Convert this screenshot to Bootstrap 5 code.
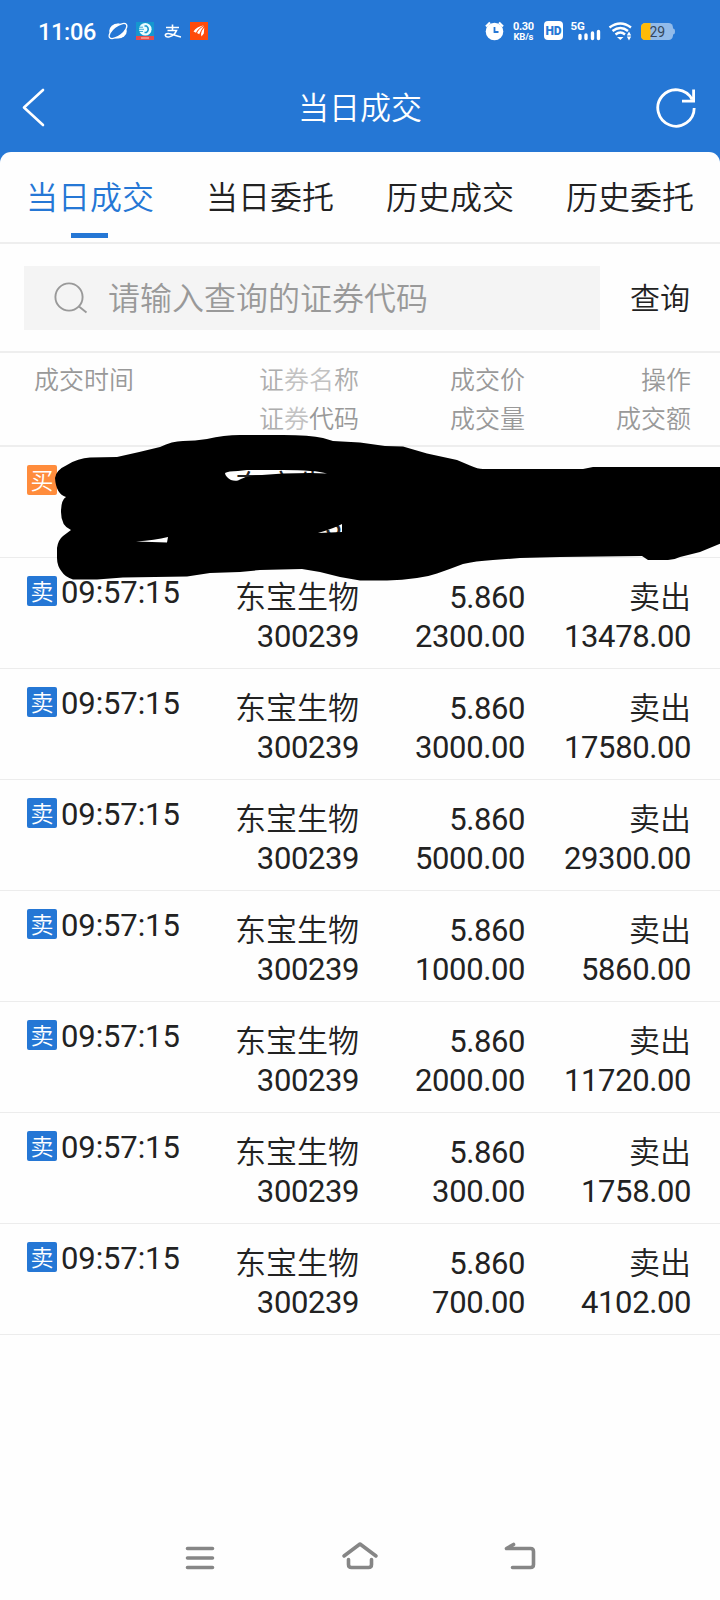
<!DOCTYPE html>
<html lang="zh-CN">
<head>
<meta charset="utf-8">
<meta name="viewport" content="width=device-width, initial-scale=1">
<title>当日成交</title>
<link href="https://cdn.jsdelivr.net/npm/bootstrap@5.3.0/dist/css/bootstrap.min.css" rel="stylesheet">
<style>
:root{--brand:#2577d5}
body{background:#fefefe;color:#222;font-family:Roboto,"Noto Sans CJK SC",sans-serif;font-weight:400;min-height:1600px;overflow-x:hidden}
.cjk{font-family:"Noto Sans CJK SC DemiLight","Noto Sans CJK SC",sans-serif;font-weight:350}
.top-area{background:var(--brand);height:174px}
.status{height:62px;padding:0 44px 0 38px}
.clock{font-size:23.5px;font-weight:500;line-height:24px;width:58px;letter-spacing:-.3px;padding-top:1px}
.title-bar{height:90px;padding:0 22px 0 20px}
.page-title{font-size:31px;line-height:40px;padding:0 0 2px 4px}
.sheet{background:#fefefe;border-radius:11px 11px 0 0;margin-top:-22px}
.tabs-row{height:92px;border-bottom:2px solid #eee}
.tab-item{font-size:32px;line-height:48px;padding-top:19px;color:#222;border:0}
.tab-item.active{color:var(--brand)}
.tab-item.active::after{content:"";display:block;width:37px;height:5px;background:var(--brand);margin:14px 0 0 71px}
.search-row{height:109px;padding:0 30px 0 24px;border-bottom:2px solid #eee}
.search-box{width:576px;height:64px;background:#f4f4f4;padding-left:30px;color:#999;font-size:32px}
.search-box span,.query{padding-bottom:3px}
.query{font-size:30px}
.grid{display:grid;grid-template-columns:170px 162px 166px 166px}
.head-row{height:94px;padding:6px 0 0 27px;color:#999;font-size:25px;line-height:39px;border-bottom:2px solid #eee}
.head-row .first{padding-left:7px}
.trade{height:111px;padding:20px 0 0 27px;border-bottom:1px solid #ececec;font-size:31px;line-height:39px;letter-spacing:-.4px}
.trade b{display:block;height:39px;line-height:33px;letter-spacing:0}
.side{width:30px;height:30px;border-radius:2px;background:var(--brand);color:#fff;font-size:23px;line-height:28px;margin-top:-2px;letter-spacing:0}
.side.buy{background:#ff8c3c}
.time{line-height:30px;margin-left:4px;letter-spacing:-.1px}
.f1{color:#adadad}.f2{color:#c2c2c2}
.scribble{left:0;top:-17px;z-index:2}
.sysnav{height:90px;margin-top:175px}
</style>
</head>
<body>
<header class="top-area text-white">
  <div class="status d-flex align-items-center justify-content-between">
    <div class="d-flex align-items-center">
      <span class="clock">11:06</span>
      <svg width="114" height="24" viewBox="96 19 114 24">
        <ellipse cx="118" cy="31" rx="8.800" ry="7.600" fill="#fff"/>
        <ellipse cx="118" cy="31" rx="10.600" ry="4.700" fill="#2577d5" stroke="#fff" stroke-width="1.300" transform="rotate(-38 118 31)"/>
        <path d="M115 38.500q9 0 11.500-10-4 7-11.500 10zM111 31q3-5.500 9-7.500-8 0-9 7.500z" fill="#fff"/>
        <rect x="136" y="22" width="18" height="18" fill="#1597cf"/>
        <circle cx="145.300" cy="29.300" r="6.300" fill="#e9fbff"/>
        <path d="M144.500 26h2q3.500 3.200 0 6.500h-2" stroke="#1597cf" stroke-width="1.600" fill="none"/>
        <path d="M139 27.200h4M139 29.300h5M139 31.500h4" stroke="#1597cf" stroke-width=".8"/>
        <rect x="136" y="36" width="18" height="4" fill="#e84b4b"/>
        <path d="M141 38h8" stroke="#ffb9a8" stroke-width="1.200"/>
        <path d="M166 27.500h13M172.500 24.500v5.500M167.500 30.500h9q-2 5-7 6.300c-5 1-5.500-3.300-1.500-3.300 4 0 8 3 13 3.500" stroke="#fff" stroke-width="1.600" fill="none"/>
        <rect x="190" y="22" width="18" height="18" fill="#ff4b0a"/>
        <path d="M193.500 31.500q3-5 10.500-6.300-6 3-8 7.500zM197 33q2-4.500 7-7-3 4-4.800 8.300zM201 34q.5-3.500 3.300-6.500l-.5 6-2.300 3z" fill="#fff"/>
      </svg>
    </div>
    <svg width="192" height="26" viewBox="484 18 192 26" font-family="Roboto,sans-serif">
      <circle cx="494.500" cy="31.500" r="8.800" fill="#fff"/>
      <path d="M486 26.500l4-4M503 26.500l-4-4" stroke="#fff" stroke-width="2.200"/>
      <path d="M494.500 27v5h4" stroke="#2577d5" stroke-width="1.800" fill="none"/>
      <text x="513" y="30" font-size="11" font-weight="700" fill="#fff" textLength="21">0.30</text>
      <text x="513.500" y="39.500" font-size="9.500" font-weight="700" fill="#fff" textLength="20">KB/s</text>
      <rect x="544" y="21" width="19" height="19" rx="4" fill="#fff"/>
      <text x="545.500" y="35" font-size="12" font-weight="900" fill="#2577d5" textLength="16">HD</text>
      <text x="570.500" y="29.500" font-size="11.500" font-weight="700" fill="#fff">5G</text>
      <path d="M580 35.500v3M586 35v3.500M592.500 33v5.500M598.500 31.500v7" stroke="#fff" stroke-width="3.400" stroke-linecap="round"/>
      <path d="M609.500 27.500q11-8 21.500 0M612.500 31q8-6 15.500 0M615.500 34.500q5-4 9.500 0" stroke="#fff" stroke-width="2.400" fill="none"/>
      <path d="M617 37h6.500l-3.200 3z" fill="#fff"/>
      <path d="M626.800 35.500l2.200-4 2.200 4zM626.800 36.500l2.200 4 2.200-4z" fill="#fff"/>
      <rect x="641" y="23" width="32" height="17" rx="4.500" fill="#92bbea"/>
      <path d="M650.500 23h-5q-4.500 0-4.500 4.500v8q0 4.500 4.500 4.500h5z" fill="#ffba08"/>
      <path d="M673 28.500q2 0 2 3t-2 3z" fill="#92bbea"/>
      <text x="649.500" y="36.500" font-size="14" fill="#35475c">29</text>
    </svg>
  </div>
  <div class="title-bar d-flex align-items-center justify-content-between">
    <svg width="40" height="44" viewBox="20 85 40 44"><path d="M43 90L24 107.500 43 125" fill="none" stroke="#fff" stroke-width="2.600" stroke-linecap="round" stroke-linejoin="round"/></svg>
    <h1 class="page-title cjk m-0">当日成交</h1>
    <svg width="42" height="44" viewBox="656 85 42 44"><path d="M694.200 108a18.200 18.200 0 1 1-2.200-8.700M693.600 89.500v11.700h-11.600" fill="none" stroke="#fff" stroke-width="2.800"/></svg>
  </div>
</header>

<main class="sheet position-relative">
  <nav class="tabs-row row g-0 text-center cjk">
    <div class="tab-item col active">当日成交</div>
    <div class="tab-item col">当日委托</div>
    <div class="tab-item col">历史成交</div>
    <div class="tab-item col">历史委托</div>
  </nav>
  <div class="search-row d-flex align-items-center justify-content-between cjk">
    <div class="search-box d-flex align-items-center">
      <svg width="34" height="34" viewBox="54 281 34 34" fill="none" stroke="#999" stroke-width="1.900"><circle cx="69" cy="297" r="13.600"/><path d="M79 306.500l7.500 6"/></svg>
      <span class="ms-3 ps-1">请输入查询的证券代码</span>
    </div>
    <span class="query">查询</span>
  </div>
  <div class="head-row grid text-end cjk">
    <div class="text-start first">成交时间</div>
    <div><span class="f1">证</span><span class="f2">券名</span><span class="f1">称</span><br><span class="f1">证</span><span class="f2">券</span>代码</div>
    <div>成交价<br>成交量</div>
    <div>操作<br>成交额</div>
  </div>

  <section class="text-end">
    <div class="trade grid position-relative">
      <div class="d-flex"><span class="side buy cjk text-center">买</span></div>
      <div><b class="cjk">东宝生物</b>300239</div>
      <div></div><div></div>
      <svg class="scribble position-absolute" width="720" height="160" viewBox="0 430 720 160">
        <path fill-rule="evenodd" d="M55 478Q56 470 67 465 78 458 90 457.500L117 457Q140 452 160 447 172 441 183 441 195 441 207 439 224 435 240 435L283 435Q310 435 323 438L333 441 360 442.500 385 446 403 446.500 427 453.500 457 460 470 465.500Q478 469 483 469L583 469 593 467H722V543L700 552 680 557Q674 560 668 560H648L642 556 560 557 520 558 493 560Q475 561 463 564 450 569 437 573.500 427 577 417 578 402 580 387 580.500H360L340 577 320 572 302 569 260 570 240 572 210 573 187 576.500 123 577.500 97 579.500H73Q65 577 62 572 57 566 57 558V548Q58 540 63 536L71 530Q61 526 61 512 61 500 66 497 56 494 55 478ZM225 473Q228 471 238 471L247 470H283Q315 470 327 473.500L310 473 283 473.500 255 475.500Q243 477 238 480.500 232 482 227 477 225 475 225 473ZM136 541.500Q155 540 168 537L167 542.500ZM318 533Q335 528 342 524V532Z"/>
      </svg>
    </div>
    <div class="trade grid"><div class="d-flex"><span class="side cjk text-center">卖</span><span class="time">09:57:15</span></div><div><b class="cjk">东宝生物</b>300239</div><div>5.860<br>2300.00</div><div><b class="cjk">卖出</b>13478.00</div></div>
    <div class="trade grid"><div class="d-flex"><span class="side cjk text-center">卖</span><span class="time">09:57:15</span></div><div><b class="cjk">东宝生物</b>300239</div><div>5.860<br>3000.00</div><div><b class="cjk">卖出</b>17580.00</div></div>
    <div class="trade grid"><div class="d-flex"><span class="side cjk text-center">卖</span><span class="time">09:57:15</span></div><div><b class="cjk">东宝生物</b>300239</div><div>5.860<br>5000.00</div><div><b class="cjk">卖出</b>29300.00</div></div>
    <div class="trade grid"><div class="d-flex"><span class="side cjk text-center">卖</span><span class="time">09:57:15</span></div><div><b class="cjk">东宝生物</b>300239</div><div>5.860<br>1000.00</div><div><b class="cjk">卖出</b>5860.00</div></div>
    <div class="trade grid"><div class="d-flex"><span class="side cjk text-center">卖</span><span class="time">09:57:15</span></div><div><b class="cjk">东宝生物</b>300239</div><div>5.860<br>2000.00</div><div><b class="cjk">卖出</b>11720.00</div></div>
    <div class="trade grid"><div class="d-flex"><span class="side cjk text-center">卖</span><span class="time">09:57:15</span></div><div><b class="cjk">东宝生物</b>300239</div><div>5.860<br>300.00</div><div><b class="cjk">卖出</b>1758.00</div></div>
    <div class="trade grid"><div class="d-flex"><span class="side cjk text-center">卖</span><span class="time">09:57:15</span></div><div><b class="cjk">东宝生物</b>300239</div><div>5.860<br>700.00</div><div><b class="cjk">卖出</b>4102.00</div></div>
  </section>
</main>

<footer class="sysnav d-flex justify-content-center">
  <svg width="400" height="90" viewBox="160 1510 400 90" fill="none" stroke="#868686" stroke-width="3.600" stroke-linecap="round" stroke-linejoin="round">
    <path d="M187.500 1548.500h25M187.500 1558h25M187.500 1567.500h25"/>
    <path d="M344 1556l16-12 16 12M348.500 1559.500v5q0 3 3 3h17q3 0 3-3v-5"/>
    <path d="M513.500 1544.500l-7 4h24q3 0 3 3v13q0 3-3 3h-18"/>
  </svg>
</footer>
<script src="https://cdn.jsdelivr.net/npm/bootstrap@5.3.0/dist/js/bootstrap.bundle.min.js"></script>
</body>
</html>
